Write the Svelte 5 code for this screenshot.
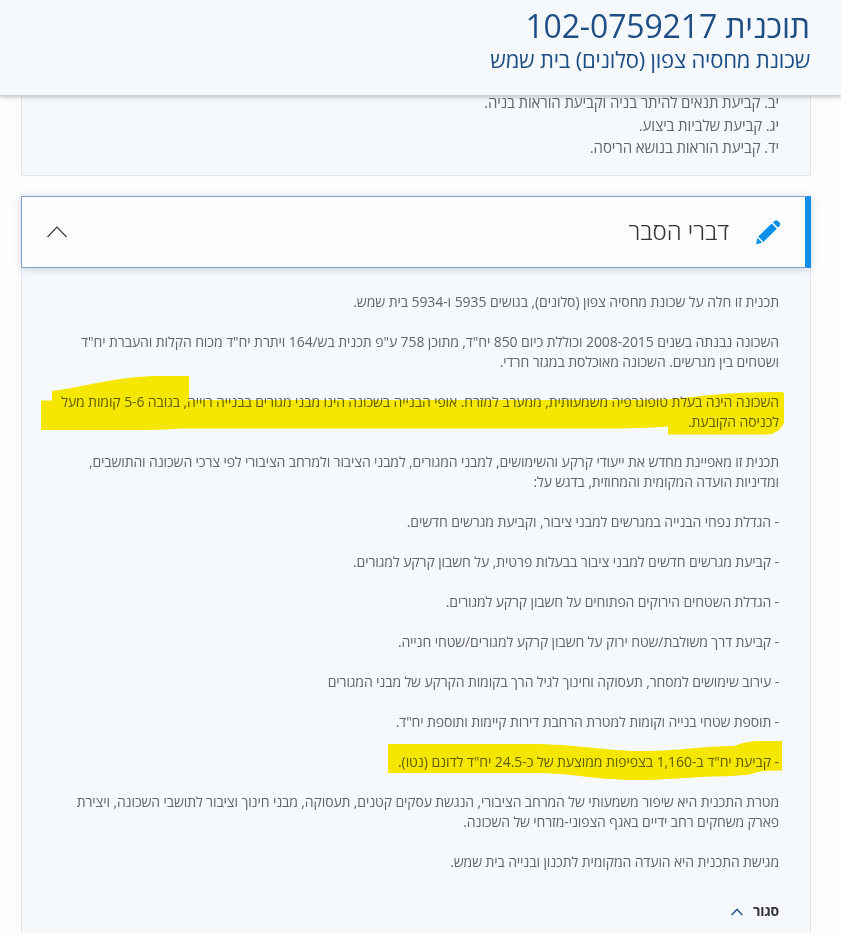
<script lang="ts">
  const planNumber = '102-0759217';

  const instructions = [
    'יב. קביעת תנאים להיתר בניה וקביעת הוראות בניה.',
    'יג. קביעת שלביות ביצוע.',
    'יד. קביעת הוראות בנושא הריסה.'
  ];

  type Paragraph = { lines: string[]; tracking: number; marker?: string };

  // marker is the outline of the highlighter stroke, relative to the paragraph
  const paragraphs: Paragraph[] = [
    {
      lines: ['תכנית זו חלה על שכונת מחסיה צפון (סלונים), בגושים 5935 ו-5934 בית שמש.'],
      tracking: -0.085
    },
    {
      lines: [
        'השכונה נבנתה בשנים 2008-2015 וכוללת כיום 850 יח"ד, מתוכן 758 ע"פ תכנית בש/164 ויתרת יח"ד מכוח הקלות והעברת יח"ד',
        'ושטחים בין מגרשים. השכונה מאוכלסת במגזר חרדי.'
      ],
      tracking: -0.096
    },
    {
      lines: [
        'השכונה הינה בעלת טופוגרפיה משמעותית, ממערב למזרח. אופי הבנייה בשכונה הינו מבני מגורים בבנייה רוייה, בגובה 5-6 קומות מעל',
        'לכניסה הקובעת.'
      ],
      tracking: -0.108,
      marker:
        'M11 -1 C50 -6 75 -16 120 -16 H148 V8 H600 Q630 8 650 5 Q690 0 741 0 Q743 0 743 2 V31 Q738 42 726 42.5 H627 V34.5 Q600 36.5 560 36.5 H140 Q120 38 90 38 H0 V8.5 H11 Z'
    },
    {
      lines: [
        'תכנית זו מאפיינת מחדש את ייעודי קרקע והשימושים, למבני המגורים, למבני הציבור ולמרחב הציבורי לפי צרכי השכונה והתושבים,',
        'ומדיניות הועדה המקומית והמחוזית, בדגש על:'
      ],
      tracking: -0.135
    },
    { lines: ['- הגדלת נפחי הבנייה במגרשים למבני ציבור, וקביעת מגרשים חדשים.'], tracking: -0.105 },
    { lines: ['- קביעת מגרשים חדשים למבני ציבור בבעלות פרטית, על חשבון קרקע למגורים.'], tracking: -0.094 },
    { lines: ['- הגדלת השטחים הירוקים הפתוחים על חשבון קרקע למגורים.'], tracking: -0.13 },
    { lines: ['- קביעת דרך משולבת/שטח ירוק על חשבון קרקע למגורים/שטחי חנייה.'], tracking: -0.113 },
    {
      lines: ['- עירוב שימושים למסחר, תעסוקה וחינוך לגיל הרך בקומות הקרקע של מבני המגורים'],
      tracking: -0.13
    },
    { lines: ['- תוספת שטחי בנייה וקומות למטרת הרחבת דירות קיימות ותוספת יח"ד.'], tracking: -0.14 },
    {
      lines: ['- קביעת יח"ד ב-1,160 בצפיפות ממוצעת של כ-24.5 יח"ד לדונם (נטו).'],
      tracking: -0.073,
      marker:
        'M347 -8 H490 C530 -8 570 -1 599 -1 C640 -1 660 -6 693 -6 Q705 -11 720 -11 H741 V18.5 Q720 18 710 22 Q700 24 670 24.5 C640 26 620 28 599 28 C550 28 535 21 490 21 H347 Z'
    },
    {
      lines: [
        'מטרת התכנית היא שיפור משמעותי של המרחב הציבורי, הנגשת עסקים קטנים, תעסוקה, מבני חינוך וציבור לתושבי השכונה, ויצירת',
        'פארק משחקים רחב ידיים באגף הצפוני-מזרחי של השכונה.'
      ],
      tracking: -0.126
    },
    { lines: ['מגישת התכנית היא הועדה המקומית לתכנון ובנייה בית שמש.'], tracking: -0.12 }
  ];
</script>

<div class="page" dir="rtl">
  <header class="plan-header">
    <h1>תוכנית {planNumber}</h1>
    <h2>שכונת מחסיה צפון (סלונים) בית שמש</h2>
  </header>

  <main>
    <section class="instructions">
      {#each instructions as item}
        <div>{item}</div>
      {/each}
    </section>

    <section class="panel">
      <button class="panel-head">
        <svg class="pencil" width="25" height="25" viewBox="0 0 25 25" fill="#0b8fe6">
          <path d="M2.2 16.5 L15.7 3.6 L20.8 8.7 L7.4 21.9 Z" />
          <path d="M16.9 2.5 L18.6 0.9 Q20.3 -0.5 22 1 L23.5 2.5 Q25 4.1 23.6 5.9 L22 7.5 Z" />
          <path d="M1.4 17.8 L6.2 22.7 L0.1 24.2 Z" />
        </svg>
        <span class="panel-title">דברי הסבר</span>
        <svg class="arrow" width="20" height="12" viewBox="0 0 20 12" fill="none" stroke="#3c3c3c" stroke-width="1.2">
          <path d="M0.5 11 L10 1.2 L19.5 11" />
        </svg>
      </button>

      <div class="panel-body">
        {#each paragraphs as p}
          <p style:letter-spacing="{p.tracking}px">
            {#each p.lines as line}
              <span class="line">{line}</span>
            {/each}
            {#if p.marker}
              <svg class="marker" width="738" height="40" fill="#ffed00">
                <path d={p.marker} />
              </svg>
            {/if}
          </p>
        {/each}

        <button class="close">
          סגור
          <svg width="12" height="8" viewBox="0 0 12 8" fill="none" stroke="#1f4e86" stroke-width="1.3">
            <path d="M0.7 7 L6 1.2 L11.3 7" />
          </svg>
        </button>
      </div>
    </section>
  </main>
</div>

<style>
  :global(body) {
    margin: 0;
    background: #fdfdfe;
  }

  .page {
    height: 933px;
    overflow: hidden;
    background: #fdfdfe;
    font-family: 'Open Sans', 'Noto Sans', sans-serif;
    color: #62656a;
  }

  .plan-header {
    position: relative;
    z-index: 2;
    box-sizing: border-box;
    height: 96px;
    padding: 6px 31px 0;
    background: #f5f9fc;
    border-bottom: 1px solid #ced4d7;
    box-shadow: 0 1px 4px rgba(0, 0, 0, 0.25);
    color: #1f4e86;
    white-space: nowrap;
  }

  h1,
  h2 {
    margin: 0;
    font-weight: 400;
  }

  h1 {
    font-size: 32px;
    letter-spacing: -0.15px;
    line-height: 40px;
  }

  h2 {
    font-size: 22px;
    letter-spacing: -0.2px;
    line-height: 26px;
  }

  main {
    margin: -6px 30px 0 21px;
  }

  .instructions {
    box-sizing: border-box;
    height: 86px;
    margin-bottom: 20px;
    padding: 0 31px;
    background: #f5f9fc;
    border: 1px solid #dfe5ea;
    font-size: 15px;
    letter-spacing: -0.12px;
    line-height: 22.5px;
  }

  .panel-head {
    position: relative;
    display: flex;
    align-items: center;
    box-sizing: border-box;
    width: 100%;
    height: 72px;
    padding: 0 24px 0 25px;
    background: #fdfdfe;
    border: 1px solid #7f9fd0;
    border-right: 6px solid #0b8fe6;
    box-shadow: 0 1px 8px rgba(40, 60, 90, 0.22);
    font: inherit;
  }

  .panel-title {
    margin-right: 27px;
    padding-bottom: 3px;
    color: #333;
    font-size: 24px;
    font-weight: 300;
    line-height: 30px;
  }

  .arrow {
    margin-right: auto;
  }

  .panel-body {
    height: 700px;
    padding: 24px 31px 0 19px;
    background: #f5f9fc;
    border: solid #dfe5ea;
    border-width: 0 1px;
  }

  p {
    position: relative;
    margin: 0 0 20px;
    font-size: 14px;
    line-height: 20px;
    white-space: nowrap;
  }

  .line {
    display: block;
  }

  .marker {
    position: absolute;
    top: 0;
    left: 0;
    overflow: visible;
    mix-blend-mode: multiply;
  }

  .close {
    display: flex;
    align-items: center;
    gap: 10px;
    margin-top: 29px;
    padding: 0;
    background: none;
    border: 0;
    color: #333;
    font: inherit;
    font-size: 14px;
    font-weight: 700;
    letter-spacing: -0.2px;
    line-height: 20px;
  }

  .close svg {
    margin-top: 2px;
  }
</style>
